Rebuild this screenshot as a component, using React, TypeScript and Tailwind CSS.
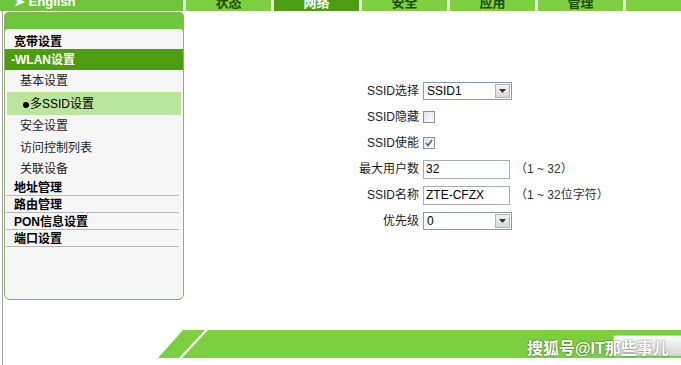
const tabs = [
  { name: "状态", active: false },
  { name: "网络", active: true },
  { name: "安全", active: false },
  { name: "应用", active: false },
  { name: "管理", active: false },
];

const subItems = ["基本设置", "多SSID设置", "安全设置", "访问控制列表", "关联设备"];
const groups = ["地址管理", "路由管理", "PON信息设置", "端口设置"];

function Select({ value }: { value: string }) {
  return (
    <div className="flex h-[18px] w-[89px] items-center border border-[#7f9db9] bg-white">
      <span className="flex-1 pl-[3px] text-[12px] leading-none text-black">{value}</span>
      <span className="mr-[1px] flex h-[14px] w-[15px] items-center justify-center border border-[#b4b4b4] bg-gradient-to-b from-[#f4f4f4] to-[#d8d8d8]">
        <svg width="7" height="4" viewBox="0 0 7 4">
          <path d="M0 0h7L3.5 4z" fill="#333" />
        </svg>
      </span>
    </div>
  );
}

function Check({ checked }: { checked?: boolean }) {
  return (
    <div className="flex h-[12px] w-[12px] items-center justify-center border border-[#8e8f8f] bg-gradient-to-br from-[#e2e2e2] to-white">
      {checked && (
        <svg width="8" height="8" viewBox="0 0 8 8">
          <path d="M1 4l2 2.5L7 1" stroke="#4a5f97" strokeWidth="1.6" fill="none" />
        </svg>
      )}
    </div>
  );
}

function Field({ value }: { value: string }) {
  return (
    <div className="flex h-[19px] w-[87px] items-center border border-[#a5acb2] bg-white pl-[2px] text-[12px] text-black">
      {value}
    </div>
  );
}

export default function App() {
  const rows = [
    { label: "SSID选择", control: <Select value="SSID1" /> },
    { label: "SSID隐藏", control: <Check /> },
    { label: "SSID使能", control: <Check checked /> },
    { label: "最大用户数", control: <Field value="32" />, note: "（1 ~ 32）" },
    { label: "SSID名称", control: <Field value="ZTE-CFZX" />, note: "（1 ~ 32位字符）" },
    { label: "优先级", control: <Select value="0" /> },
  ];

  return (
    <div className="relative h-[365px] w-[681px] overflow-hidden bg-white font-['Liberation_Sans','Noto_Sans_CJK_SC',sans-serif] text-[12px] text-[#222]">
      {/* top nav */}
      <div className="flex h-[11px] gap-[3px] overflow-hidden bg-[#eef6e6]">
        <div className="w-[183px] bg-[#6fc63c] pl-[14px]">
          <span className="-mt-[8px] block text-[13px] font-bold text-white">➤ English</span>
        </div>
        {tabs.map((t) => (
          <div
            key={t.name}
            className={
              "w-[85px] text-center " +
              (t.active ? "bg-[#4c9e10] text-white" : "bg-[#7cd040] text-[#1f4d06]")
            }
          >
            <span className="-mt-[7px] block text-[13px] font-bold">{t.name}</span>
          </div>
        ))}
        <div className="flex-1 bg-[#7cd040]" />
      </div>

      <div className="ml-[2px] flex h-[354px] flex-col border-l border-[#a0a0a0]">
        <div className="flex h-[319px]">
          {/* sidebar */}
          <div className="ml-[1px] mt-[1px] flex h-[288px] w-[180px] flex-col rounded-b-[6px] rounded-t-[4px] border border-[#8fb06e] bg-[#6fc63c]">
            <div className="h-[16px]" />
            <div className="flex flex-1 flex-col rounded-b-[5px] rounded-t-[3px] bg-[#f6f6f6]">
              <div className="flex h-[19px] items-end pl-[9px] text-[12px] font-bold leading-none text-black">宽带设置</div>
              <div className="mt-[1px] flex h-[21px] items-center bg-[#4c9e10] pl-[6px] text-[12px] font-bold text-white">-WLAN设置</div>
              <div className="flex h-[22px] items-center pl-[15px]">{subItems[0]}</div>
              <div className="mx-[2px] flex h-[23px] items-end bg-[#b9e69c] pb-[2px] pl-[16px] text-black">
                <span className="mb-[5px] mr-[1px] h-[6px] w-[6px] rounded-full bg-black" />
                {subItems[1]}
              </div>
              <div className="flex h-[22px] items-center pl-[15px]">{subItems[2]}</div>
              <div className="flex h-[21px] items-center pl-[15px]">{subItems[3]}</div>
              <div className="flex h-[21px] items-center pl-[15px]">{subItems[4]}</div>
              {groups.map((g) => (
                <div
                  key={g}
                  className="mx-[1px] mr-[4px] flex h-[17px] items-end border-b border-[#b8b8b8] pl-[8px] text-[12px] font-bold leading-[14px] text-black"
                >
                  {g}
                </div>
              ))}
            </div>
          </div>

          {/* form */}
          <div className="ml-[137px] mt-[67px] flex flex-col">
            {rows.map((r) => (
              <div key={r.label} className="flex h-[26px] items-center">
                <div className="w-[102px] pr-[4px] text-right text-[12px] text-[#222]">{r.label}</div>
                {r.control}
                {r.note && <span className="ml-[5px] text-[12px] text-[#333]">{r.note}</span>}
              </div>
            ))}
          </div>
        </div>

        {/* footer band */}
        <div className="ml-[155px] flex h-[28px]">
          <svg width="52" height="28" viewBox="0 0 52 28" className="shrink-0">
            <polygon points="0,28 21,28 47,0 25,0" fill="#7cd040" />
            <polygon points="24,28 52,28 52,0 50,0" fill="#7cd040" />
          </svg>
          <div className="flex-1 bg-[#7cd040]" />
        </div>
      </div>

      {/* overlay button + watermark */}
      <div className="absolute left-[613px] top-[335px] h-[21px] w-[80px] rounded-l-[3px] border border-[#c8c8c8] bg-gradient-to-b from-[#fafafa] to-[#d9d9d9]" />
      <div className="absolute left-[527px] top-[337px] text-[16px] font-bold text-white [text-shadow:0_0_2px_rgba(0,0,0,0.6)]">
        搜狐号@IT那些事儿
      </div>
    </div>
  );
}
